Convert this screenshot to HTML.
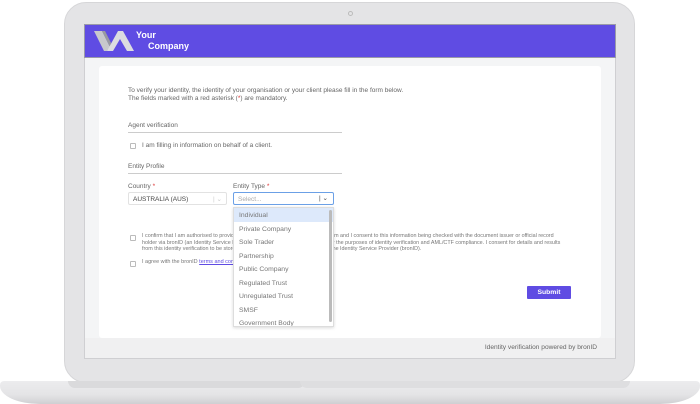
<!DOCTYPE html>
<html><head><style>
*{margin:0;padding:0;box-sizing:border-box}
body{width:700px;height:404px;background:#fff;position:relative;overflow:hidden;font-family:"Liberation Sans",sans-serif;color:#555}
.a{position:absolute}
.lid{left:64px;top:2px;width:571px;height:381px;background:#e4e4e6;border-radius:22px;border:1px solid #d6d6d8}
.screen{left:84px;top:24px;width:532px;height:335px;background:#f4f5f6;border:1px solid #cfcfd2}
.hdr{left:84px;top:24px;width:532px;height:34px;background:#5f4ce3;border:1px solid #9a9aa8}
.card{left:99px;top:66px;width:502px;height:272px;background:#fff;border-radius:3px}
.foot{left:85px;top:338px;width:530px;height:20px;background:#f0f0f1;font-size:6.6px;color:#666;text-align:right;padding:6px 18px 0 0}
.base{left:0;top:381px;width:700px;height:23px;background:linear-gradient(#ececee,#e4e4e6 60%,#cfcfd2);border-radius:4px 4px 40px 40px/4px 4px 18px 18px}
.notch{left:68px;top:381px;width:237px;height:7px;background:#dadadc;border-radius:0 0 8px 8px}
.notch2{left:300px;top:381px;width:330px;height:7px;background:#dedee0;border-radius:0 0 8px 8px}
.t{font-size:6.5px;color:#666;line-height:8px}
.cb{width:6px;height:6px;border:1px solid #bbb;border-radius:1px;background:#fff}
.line{height:1px;background:#ccc}
.dd{left:233px;top:207px;width:101px;height:120px;background:#fff;border:1px solid #ddd;box-shadow:0 1px 3px rgba(0,0,0,.15);overflow:hidden}
.dd div{height:13.5px;font-size:6.8px;color:#777;padding:4px 0 0 5px}
</style></head><body>
<div class="a lid"></div>
<div class="a" style="left:348px;top:11px;width:5px;height:5px;border:1px solid #bbb;border-radius:50%"></div>
<div class="a screen"></div>
<div class="a hdr"></div>
<svg class="a" style="left:94px;top:30px" width="40" height="22" viewBox="0 0 40 22">
<polygon points="0,1 8,1 16,17 13,21 10,21" fill="#c8c8cc"/>
<polygon points="8,1 11,1 17,13 16,17" fill="#9a9aa0"/>
<polygon points="13,21 24,1 29,1 40,21 33,21 26,9 19,21" fill="#dcdce0"/>
</svg>
<div class="a" style="left:136px;top:30px;color:#fff;font-weight:bold;font-size:9px;line-height:11px">Your<br><span style="padding-left:12px">Company</span></div>
<div class="a card"></div>
<div class="a t" style="left:128px;top:87px">To verify your identity, the identity of your organisation or your client please fill in the form below.<br>The fields marked with a red asterisk (<span style="color:#d33">*</span>) are mandatory.</div>
<div class="a t" style="left:128px;top:122px">Agent verification</div>
<div class="a line" style="left:128px;top:132px;width:214px"></div>
<div class="a cb" style="left:130px;top:143px"></div>
<div class="a t" style="left:142px;top:142px">I am filling in information on behalf of a client.</div>
<div class="a t" style="left:128px;top:163px">Entity Profile</div>
<div class="a line" style="left:128px;top:173px;width:214px"></div>
<div class="a t" style="left:128px;top:183px">Country <span style="color:#d33">*</span></div>
<div class="a t" style="left:233px;top:183px">Entity Type <span style="color:#d33">*</span></div>
<div class="a" style="left:128px;top:192px;width:99px;height:13px;border:1px solid #e2e2e2;border-radius:2px;font-size:6.5px;color:#444;padding:3px 0 0 4px">AUSTRALIA (AUS)<span style="position:absolute;left:84px;top:2px;color:#ccc">| ⌄</span></div>
<div class="a" style="left:233px;top:192px;width:101px;height:13px;border:1px solid #6ba0e6;border-radius:2px;font-size:6.5px;color:#aaa;padding:3px 0 0 4px">Select...<span style="position:absolute;left:85px;top:1px;color:#444">| ⌄</span></div>
<div class="a cb" style="left:130px;top:235px"></div>
<div class="a" style="left:142px;top:233px;font-size:5.4px;color:#777;line-height:6.5px;width:424px">I confirm that I am authorised to provide the personal details presented in this form and I consent to this information being checked with the document issuer or official record holder via bronID (an Identity Service Provider) and any authorised third party for the purposes of identity verification and AML/CTF compliance. I consent for details and results from this identity verification to be stored for audit and compliance purposes by the Identity Service Provider (bronID).</div>
<div class="a cb" style="left:130px;top:261px"></div>
<div class="a" style="left:142px;top:259px;font-size:5.5px;color:#777">I agree with the bronID <span style="color:#5f4ce3;text-decoration:underline">terms and conditions</span></div>
<div class="a dd">
<div style="background:#dde9fb">Individual</div><div>Private Company</div><div>Sole Trader</div><div>Partnership</div><div>Public Company</div><div>Regulated Trust</div><div>Unregulated Trust</div><div>SMSF</div><div>Government Body</div>
</div>
<div class="a" style="left:329px;top:210px;width:3px;height:112px;background:#bbb;border-radius:2px"></div>
<div class="a" style="left:527px;top:286px;width:44px;height:13px;background:#5f4ce3;color:#fff;font-size:6.8px;font-weight:bold;text-align:center;padding-top:3px;border-radius:1px">Submit</div>
<div class="a foot">Identity verification powered by bronID</div>
<div class="a base"></div>
<div class="a notch"></div>
<div class="a notch2"></div>
</body></html>
